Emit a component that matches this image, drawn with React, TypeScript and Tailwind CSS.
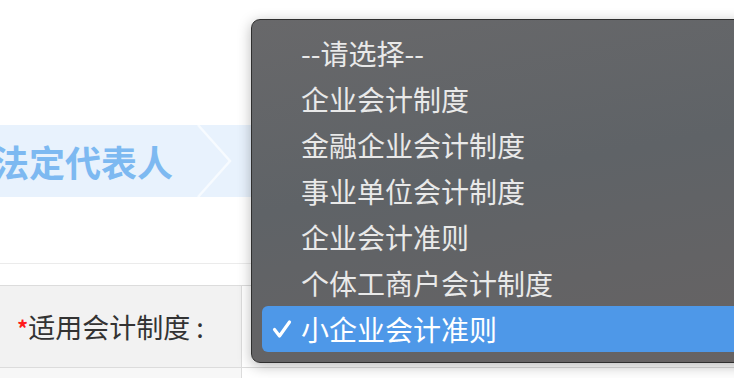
import React from "react";

const options = [
  "--请选择--",
  "企业会计制度",
  "金融企业会计制度",
  "事业单位会计制度",
  "企业会计准则",
  "个体工商户会计制度",
  "小企业会计准则",
];

const selected = "小企业会计准则";

function StepBand() {
  return (
    <div className="relative h-[72px] w-full bg-[#e8f2fd] overflow-hidden">
      <div className="flex h-full items-center">
        <span className="ml-[-7px] text-[36px] font-bold leading-none text-[#7db9f1]">
          法定代表人
        </span>
      </div>
      {/* chevron separator between steps */}
      <svg
        className="absolute left-[196px] top-0"
        width="40"
        height="72"
        viewBox="0 0 40 72"
      >
        <polyline
          points="2,0 34,36 2,72"
          fill="none"
          stroke="#f7fbff"
          strokeWidth="2.5"
        />
      </svg>
    </div>
  );
}

function Check() {
  return (
    <svg width="20" height="20" viewBox="0 0 20 20">
      <polyline
        points="2.5,10.5 7.5,17 17.5,3"
        fill="none"
        stroke="white"
        strokeWidth="3.2"
        strokeLinecap="round"
        strokeLinejoin="round"
      />
    </svg>
  );
}

function SelectMenu() {
  return (
    <div className="absolute left-[251px] top-[19px] w-[520px] rounded-[9px] border border-[#2f2f2f] bg-[linear-gradient(170deg,#68686a_0%,#5f6367_45%,#676363_100%)] py-[10px] shadow-[0_3px_14px_rgba(0,0,0,0.28)]">
      <ul className="flex flex-col">
        {options.map((opt) => {
          const active = opt === selected;
          return (
            <li
              key={opt}
              className={`mx-[10px] flex h-[46px] items-center rounded-[6px] ${
                active ? "bg-[#4e98e8] text-white" : "text-[#e9e9e9]"
              }`}
            >
              <span className="flex w-[39px] items-center justify-center pl-[1px]">
                {active && <Check />}
              </span>
              <span className="text-[28px] leading-none">{opt}</span>
            </li>
          );
        })}
      </ul>
    </div>
  );
}

export default function App() {
  return (
    <div
      className="relative h-[378px] w-[734px] overflow-hidden bg-white"
      style={{ fontFamily: '"Noto Sans CJK SC", "Noto Sans", sans-serif' }}
    >
      <div className="h-[125px]" />
      <StepBand />
      <div className="h-[66px]" />
      <div className="h-[22px] border-t border-[#ebebeb]" />
      <div className="flex h-[83px] border-y border-[#dcdcdc]">
        <div className="flex w-[241px] items-center bg-[#f2f2f2] pl-[17px] text-[27px] leading-none text-[#333]">
          <span className="self-start pt-[30px] text-[22px] font-bold text-[#ff1a1a]">*</span>
          <span>适用会计制度</span>
          <span className="ml-[6px]">:</span>
        </div>
        <div className="flex-1 border-l border-[#dcdcdc] bg-white" />
      </div>
      <div className="flex h-[20px]">
        <div className="w-[241px] bg-[#f7f7f7]" />
        <div className="flex-1 border-l border-[#dcdcdc]" />
      </div>
      <SelectMenu />
    </div>
  );
}
